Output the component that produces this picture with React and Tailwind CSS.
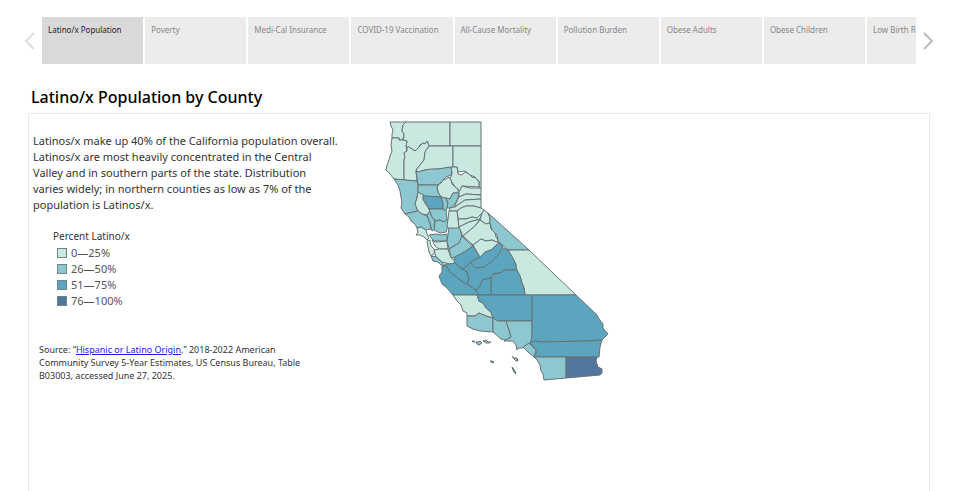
import React, { useState } from 'react';

const tabs = [
  'Latino/x Population',
  'Poverty',
  'Medi-Cal Insurance',
  'COVID-19 Vaccination',
  'All-Cause Mortality',
  'Pollution Burden',
  'Obese Adults',
  'Obese Children',
  'Low Birth Rate',
];

const legend = [
  { label: '0—25%', swatch: 'bg-[#c9e8df]' },
  { label: '26—50%', swatch: 'bg-[#8dc8d0]' },
  { label: '51—75%', swatch: 'bg-[#5ba5bf]' },
  { label: '76—100%', swatch: 'bg-[#52779f]' },
];

const fills = {
  low: '#c9e8df',
  mid: '#8dc8d0',
  high: '#5ba5bf',
  top: '#52779f',
};

const counties = [
  { name: 'Del Norte', band: 'low', points: '390,122 406,122 403,125 402,131 404,134 404,137 402,140 399,140 399,138 392,138 392,134 393,130 391,126' },
  { name: 'Siskiyou', band: 'low', points: '406,122 450,122 450,146 429,146 427,141 425,144 423,143 420,145 417,150 415,151 409,147 408,150 406,146 407,141 403,140 404,137 404,134 402,131 403,125' },
  { name: 'Modoc', band: 'low', points: '450,122 481,122 481,146 450,146' },
  { name: 'Humboldt', band: 'low', points: '392,138 399,138 399,140 403,140 407,141 406,146 407,150 404,153 405,157 404,160 404,180 394,179 390,174 386,170 387,165 389,160 390,156 392,151 391,145' },
  { name: 'Trinity', band: 'low', points: '407,147 409,147 415,151 417,149 423,143 425,144 427,141 429,146 425,152 424,160 420,165 416,170 417,181 404,180 404,160 405,157 404,153 407,151' },
  { name: 'Shasta', band: 'low', points: '429,146 453,146 453,167 445,168 438,169 425,170 418,172 416,170 420,165 424,160 425,152' },
  { name: 'Lassen', band: 'low', points: '453,146 481,146 481,188 479,187 479,181 475,177 470,175 465,171 458,172 457,167 453,167' },
  { name: 'Plumas', band: 'low', points: '451,167 457,167 458,174 462,175 465,172 469,174 472,177 476,178 479,182 479,187 462,186 460,191 455,187 450,179 452,174' },
  { name: 'Tehama', band: 'mid', points: '416,171 418,172 425,170 431,169 438,169 445,168 450,167 452,171 451,175 446,177 443,180 440,183 438,185 418,185' },
  { name: 'Butte', band: 'low', points: '438,185 441,183 443,180 446,179 449,177 451,180 452,184 455,187 458,189 458,193 453,193 450,199 445,198 441,197 438,192 437,188' },
  { name: 'Mendocino', band: 'mid', points: '394,179 417,181 418,185 418,192 417,197 415,204 418,211 409,213 405,214 403,211 401,208 402,203 401,197 400,191 398,185' },
  { name: 'Glenn', band: 'mid', points: '418,185 438,185 437,188 438,192 441,197 423,196 418,192' },
  { name: 'Colusa', band: 'high', points: '423,196 441,197 443,203 443,209 430,209 427,205 424,200' },
  { name: 'Sutter', band: 'mid', points: '441,197 446,198 448,204 446,211 443,209 443,203' },
  { name: 'Yuba', band: 'mid', points: '446,198 450,199 453,193 459,193 458,198 455,204 450,208 447,208 448,203' },
  { name: 'Sierra', band: 'low', points: '459,192 462,186 470,188 481,188 481,195 466,194 459,197' },
  { name: 'Nevada', band: 'low', points: '459,197 466,194 481,195 481,199 465,200 459,204 454,207' },
  { name: 'Placer', band: 'low', points: '450,208 455,207 459,204 465,200 481,199 481,208 474,206 466,206 461,208 457,211 449,211' },
  { name: 'El Dorado', band: 'low', points: '457,211 461,208 466,206 474,206 481,208 484,210 482,214 477,218 472,217 466,219 458,219' },
  { name: 'Lake', band: 'low', points: '418,192 421,194 423,194 423,200 427,206 430,211 427,215 422,214 418,211 415,204 417,198' },
  { name: 'Sonoma', band: 'mid', points: '405,214 409,213 418,211 422,214 427,216 430,223 431,229 426,230 421,227 417,228 415,224 411,221 409,217' },
  { name: 'Napa', band: 'mid', points: '427,215 430,211 432,217 435,221 434,226 435,229 432,231 430,223' },
  { name: 'Yolo', band: 'mid', points: '429,209 443,209 446,211 447,219 444,222 440,220 436,221 432,217' },
  { name: 'Solano', band: 'mid', points: '435,221 440,220 444,222 447,219 448,226 446,232 440,233 434,230' },
  { name: 'Sacramento', band: 'low', points: '449,211 457,211 458,219 459,229 449,229 447,226 448,219' },
  { name: 'Marin', band: 'low', points: '417,228 421,227 426,230 427,234 429,238 427,240 424,237 420,235 416,235 418,232' },
  { name: 'Contra Costa', band: 'mid', points: '429,235 436,234 441,235 447,234 447,241 440,241 434,241' },
  { name: 'Alameda', band: 'low', points: '432,240 436,242 447,241 448,249 439,249 435,246' },
  { name: 'San Mateo', band: 'low', points: '427,241 430,240 431,246 435,250 434,254 431,256 429,252 428,247' },
  { name: 'San Joaquin', band: 'mid', points: '449,228 460,228 462,237 459,243 449,249 447,241' },
  { name: 'Amador', band: 'low', points: '458,219 466,219 472,217 477,218 482,213 480,219 469,222 459,227' },
  { name: 'Alpine', band: 'low', points: '484,210 488,213 490,218 490,223 486,224 480,220 482,213' },
  { name: 'Calaveras', band: 'low', points: '459,227 469,222 480,219 475,226 463,236' },
  { name: 'Tuolumne', band: 'low', points: '463,236 475,226 480,220 486,224 490,223 491,229 495,232 496,237 498,240 498,243 492,240 486,241 481,239 473,245' },
  { name: 'Stanislaus', band: 'mid', points: '449,249 459,243 462,236 468,242 473,246 466,251 455,257 451,258' },
  { name: 'Santa Clara', band: 'low', points: '434,250 439,249 448,249 451,258 454,260 455,263 450,264 442,262 436,257' },
  { name: 'Santa Cruz', band: 'mid', points: '431,256 436,257 442,262 445,266 441,265 438,262 433,261' },
  { name: 'Mono', band: 'mid', points: '488,213 529,250 508,250 498,241 497,235 492,230 490,223 490,218' },
  { name: 'Inyo', band: 'low', points: '508,250 529,250 576,295 525,295 524,288 522,283 520,276 516,270 516,264 513,259' },
  { name: 'Monterey', band: 'high', points: '442,266 446,266 450,272 455,276 463,282 472,286 479,295 453,295 447,288 442,284 439,276 442,272' },
  { name: 'San Benito', band: 'high', points: '445,264 450,264 455,263 461,268 467,272 469,278 467,284 463,282 455,276 450,272' },
  { name: 'Merced', band: 'high', points: '454,259 455,257 466,251 473,246 480,257 470,263 463,269 461,268 455,263' },
  { name: 'Mariposa', band: 'low', points: '473,245 481,239 486,241 492,240 499,243 495,248 491,250 485,252 480,257' },
  { name: 'Fresno', band: 'high', points: '463,269 470,263 480,257 491,250 499,243 503,248 508,250 514,260 517,270 504,270 500,273 493,274 490,278 483,280 480,286 476,290 467,284 469,278 467,272' },
  { name: 'Madera', band: 'high', points: '470,262 480,257 485,252 491,250 499,243 503,246 498,255 491,262 484,267 475,268' },
  { name: 'Kings', band: 'high', points: '476,290 480,286 482,280 491,278 491,295 479,295' },
  { name: 'Tulare', band: 'high', points: '491,278 494,274 500,273 504,270 517,270 520,276 522,283 524,288 525,295 491,295' },
  { name: 'San Luis Obispo', band: 'low', points: '453,295 477,295 479,301 483,303 486,308 491,312 493,318 486,316 479,313 475,316 467,316 467,313 463,311 461,305 457,301' },
  { name: 'Kern', band: 'high', points: '477,295 532,295 532,321 498,321 493,318 491,312 486,308 483,303 479,301' },
  { name: 'Santa Barbara', band: 'mid', points: '467,316 475,316 479,313 486,316 493,318 493,332 480,331 473,329 467,326' },
  { name: 'Ventura', band: 'mid', points: '493,318 498,321 506,321 509,330 511,337 506,340 501,339 493,332' },
  { name: 'Los Angeles', band: 'mid', points: '506,321 532,321 532,340 529,344 523,348 519,348 517,350 516,345 513,341 504,341 511,337 509,330' },
  { name: 'San Bernardino', band: 'high', points: '532,295 576,295 597,315 599,319 603,324 603,328 608,334 605,337 602,340 586,341 541,342 535,341 530,344 532,337' },
  { name: 'Riverside', band: 'high', points: '530,343 535,341 541,342 586,341 602,340 600,347 599,357 534,357 537,351' },
  { name: 'Orange', band: 'mid', points: '523,347 529,343 536,350 534,357 528,352' },
  { name: 'San Diego', band: 'mid', points: '534,357 566,357 566,378 544,380 543,374 541,371 540,365 537,360' },
  { name: 'Imperial', band: 'top', points: '566,357 597,357 596,361 598,367 602,369 602,373 600,375 566,378' },
  { name: 'San Miguel Island', band: 'mid', points: '472,341 474,341 475,342 473,342' },
  { name: 'Santa Rosa Island', band: 'mid', points: '476,342 478,342 480,341 482,343 479,345 477,344' },
  { name: 'Santa Cruz Island', band: 'mid', points: '483,341 486,340 488,342 491,342 489,343 486,343' },
  { name: 'San Nicolas Island', band: 'mid', points: '490,361 492,361 494,362 492,363' },
  { name: 'Catalina Island', band: 'mid', points: '512,356 514,358 517,358 518,361 516,361 514,359' },
  { name: 'San Clemente Island', band: 'mid', points: '512,367 513,368 515,371 516,374 514,372 513,370' },
];

const CaliforniaMap = () => (
  <svg viewBox="380 118 234 268" className="w-[234px] h-[268px] shrink-0" role="img" aria-label="Latino/x population by California county">
    {counties.map((county) => (
      <polygon
        key={county.name}
        points={county.points}
        fill={fills[county.band]}
        stroke="#667274"
        strokeWidth="1"
        strokeLinejoin="round"
      />
    ))}
  </svg>
);

const Arrow = ({ points, color }) => (
  <svg viewBox="0 0 11 18" className="w-[11px] h-[18px]" fill="none" stroke={color} strokeWidth="1.8">
    <polyline points={points} />
  </svg>
);

const App = () => {
  const [active, setActive] = useState(0);

  return (
    <div className="min-h-screen flex flex-col bg-white pt-4 font-['Noto_Sans','Open_Sans',sans-serif] text-[#333333]">
      {/* Story navigation */}
      <nav className="flex items-center px-6 mt-px">
        <button aria-label="Previous" className="w-[18px] shrink-0">
          <Arrow points="10,1 2,9 10,17" color="#dcdcdc" />
        </button>
        <div className="flex flex-1 min-w-0 overflow-hidden">
          {tabs.map((tab, index) => (
            <button
              key={tab}
              onClick={() => setActive(index)}
              className={`w-[11.8%] h-12 shrink-0 flex items-start border-r-2 border-b border-white pl-1.5 pt-1 text-left text-[8px] leading-[18px] whitespace-nowrap ${
                active === index ? 'bg-[#d9d9d9] text-[#222222]' : 'bg-[#ececec] text-[#868686]'
              }`}
            >
              {tab}
            </button>
          ))}
        </div>
        <button aria-label="Next" className="w-5 shrink-0 flex justify-end pr-0.5">
          <Arrow points="1,1 9,9 1,17" color="#b8b8b8" />
        </button>
      </nav>

      <h1 className="mt-5 pl-[31px] text-[16px] leading-6 font-medium text-black">Latino/x Population by County</h1>

      <main className="mt-1 ml-7 mr-[30px] flex flex-1 items-start border border-b-0 border-[#ebebeb]">
        <div className="w-[351px] shrink-0 pt-[19px] pl-1">
          <p className="w-[310px] text-[11px] leading-[16px]">
            Latinos/x make up 40% of the California population overall. Latinos/x are most heavily concentrated in the Central
            Valley and in southern parts of the state. Distribution
            <br />
            varies widely; in northern counties as low as 7% of the
            <br />
            population is Latinos/x.
          </p>

          <div className="mt-3.5 pl-5">
            <h2 className="text-[10px] leading-[18px]">Percent Latino/x</h2>
            <ul className="pl-1">
              {legend.map((item) => (
                <li key={item.label} className="flex items-center gap-1 text-[11px] leading-[16px] text-[#555555]">
                  <span className={`w-2.5 h-2.5 border border-[#6f8585] ${item.swatch}`} />
                  {item.label}
                </li>
              ))}
            </ul>
          </div>

          <p className="mt-[34px] ml-1.5 w-[270px] text-[9px] leading-[13px]">
            Source: “<a href="#source" className="text-[#1a1aee] underline">Hispanic or Latino Origin</a>,” 2018-2022 American
            Community Survey 5-Year Estimates, US Census Bureau, Table B03003, accessed June 27, 2025.
          </p>
        </div>
        <div className="pt-1">
          <CaliforniaMap />
        </div>
      </main>
    </div>
  );
};

export default App;
